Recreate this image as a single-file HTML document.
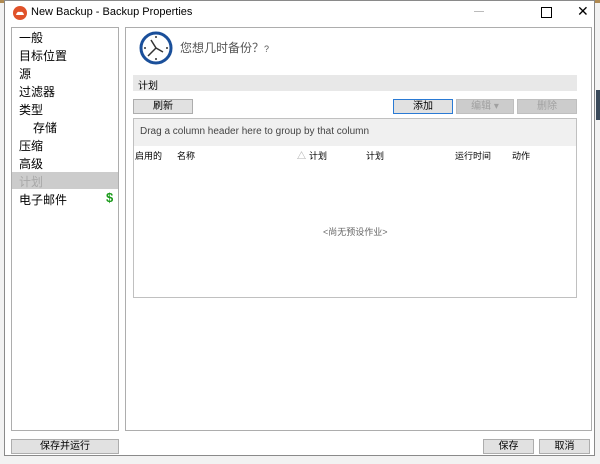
<!DOCTYPE html>
<html><head><meta charset="utf-8"><style>
body{margin:0;width:600px;height:464px;overflow:hidden;background:#f2f2f2;font-family:"Liberation Sans","Noto Sans CJK SC",sans-serif;position:relative}
.a{position:absolute}
.win{left:4px;top:0;width:591px;height:456px;background:#fff;border:1px solid #8a8a8a;box-sizing:border-box}
.tb{left:0;top:0;width:589px;height:24px;background:#fff}
.box{background:#fff;border:1px solid #adadad;box-sizing:border-box}
.nav{font-size:12px;color:#000}
.btn{background:#e1e1e1;border:1px solid #adadad;box-sizing:border-box;font-size:10px;text-align:center;line-height:13px;color:#000}
.dis{color:#a0a0a0;background:#ccc;border-color:#bfbfbf}
.hd{font-size:9px;top:148px;color:#000}
</style></head><body>
<div class="a" style="left:0;top:0;width:600px;height:3px;background:#b08a50"></div>
<div class="a" style="left:596px;top:90px;width:4px;height:30px;background:#3a4a5a"></div>
<div class="a win">
<div class="a tb"></div>
<svg class="a" style="left:8px;top:5px" width="14" height="14"><circle cx="7" cy="7" r="7" fill="#e0522a"/><path d="M3 9 Q4 5 7 6 Q10 5 11 9 Z" fill="#fff"/></svg>
<div class="a" style="left:26px;top:5px;font-size:11px">New Backup - Backup Properties</div>
<div class="a" style="left:469px;top:10px;width:10px;height:1px;background:#bbb"></div>
<div class="a" style="left:536px;top:6px;width:9px;height:9px;border:1px solid #000"></div>
<div class="a" style="left:572px;top:2px;font-size:14px">✕</div>
<div class="a box" style="left:6px;top:26px;width:108px;height:404px"></div>
<div class="a nav" style="left:14px;top:28px">一般</div>
<div class="a nav" style="left:14px;top:46px">目标位置</div>
<div class="a nav" style="left:14px;top:64px">源</div>
<div class="a nav" style="left:14px;top:82px">过滤器</div>
<div class="a nav" style="left:14px;top:100px">类型</div>
<div class="a nav" style="left:28px;top:118px">存储</div>
<div class="a nav" style="left:14px;top:136px">压缩</div>
<div class="a nav" style="left:14px;top:154px">高级</div>
<div class="a" style="left:7px;top:171px;width:106px;height:17px;background:#cccccc"></div>
<div class="a nav" style="left:14px;top:172px;color:#a8a8a8">计划</div>
<div class="a nav" style="left:14px;top:190px">电子邮件</div>
<div class="a" style="left:101px;top:189px;font-size:13px;font-weight:bold;color:#1a9a1a">$</div>
<div class="a box" style="left:120px;top:26px;width:467px;height:404px"></div>
<svg class="a" style="left:134px;top:30px" width="34" height="34"><circle cx="17" cy="17" r="15" fill="#fff" stroke="#1a4f9a" stroke-width="3"/><path d="M17 17 L12 9 M17 17 L24 21 M17 17 L9 25" stroke="#333" stroke-width="1.5"/><circle cx="17" cy="6" r="1" fill="#333"/><circle cx="28" cy="17" r="1" fill="#333"/><circle cx="17" cy="28" r="1" fill="#333"/><circle cx="6" cy="17" r="1" fill="#333"/></svg>
<div class="a" style="left:175px;top:38px;font-size:12px;color:#555">您想几时备份？<span style="font-size:9px">?</span></div>
<div class="a" style="left:128px;top:74px;width:444px;height:16px;background:#e8e8e8"></div>
<div class="a" style="left:133px;top:76px;font-size:10px">计划</div>
<div class="a btn" style="left:128px;top:98px;width:60px;height:15px">刷新</div>
<div class="a btn" style="left:388px;top:98px;width:60px;height:15px;border-color:#2a7ad4">添加</div>
<div class="a btn dis" style="left:451px;top:98px;width:58px;height:15px">编辑 ▾</div>
<div class="a btn dis" style="left:512px;top:98px;width:60px;height:15px">删除</div>
<div class="a box" style="left:128px;top:117px;width:444px;height:180px;border-color:#c0c0c0"></div>
<div class="a" style="left:129px;top:118px;width:442px;height:27px;background:#f0f0f0"></div>
<div class="a" style="left:135px;top:125px;font-size:10px;color:#444">Drag a column header here to group by that column</div>
<div class="a hd" style="left:130px">启用的</div>
<div class="a hd" style="left:172px">名称</div>
<div class="a hd" style="left:292px;color:#999">△</div>
<div class="a hd" style="left:304px">计划</div>
<div class="a hd" style="left:361px">计划</div>
<div class="a hd" style="left:450px">运行时间</div>
<div class="a hd" style="left:507px">动作</div>
<div class="a" style="left:318px;top:224px;font-size:9px;color:#666">&lt;尚无预设作业&gt;</div>
<div class="a btn" style="left:6px;top:438px;width:108px;height:15px">保存并运行</div>
<div class="a btn" style="left:478px;top:438px;width:51px;height:15px">保存</div>
<div class="a btn" style="left:534px;top:438px;width:51px;height:15px">取消</div>
</div>
</body></html>
